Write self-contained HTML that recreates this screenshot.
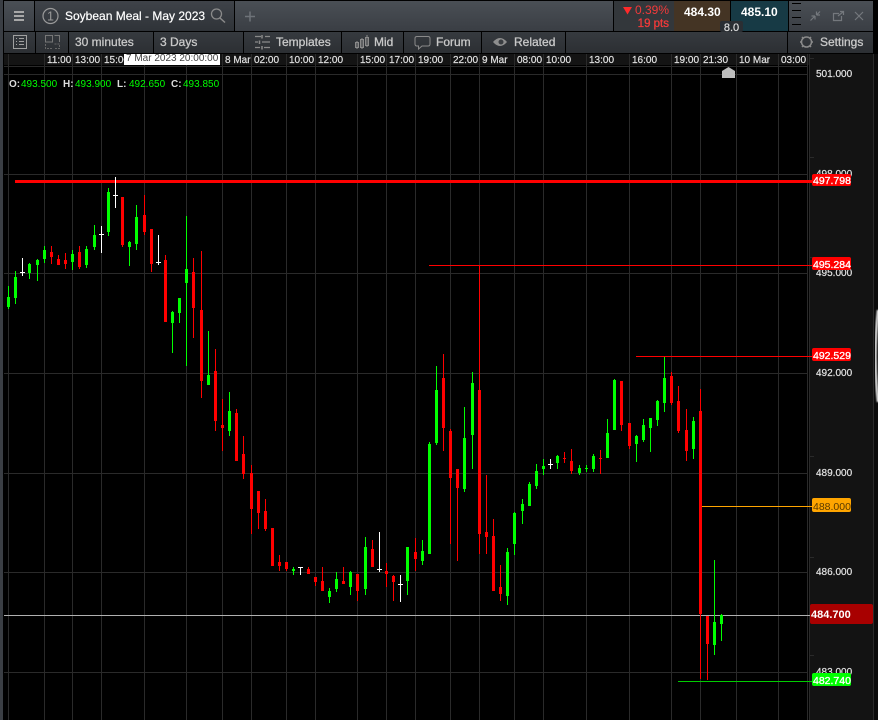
<!DOCTYPE html>
<html><head><meta charset="utf-8"><style>
html,body{margin:0;padding:0;background:#000;width:878px;height:720px;overflow:hidden}
svg{display:block;font-family:"Liberation Sans",sans-serif}
.t{font-size:12px;fill:#c8c8c8;stroke:#c8c8c8;stroke-width:.3px}
.g text{stroke:#e0e0e0;stroke-width:.2px}
.p text{stroke-width:.3px}
</style></head><body>
<svg width="878" height="720" viewBox="0 0 878 720" xmlns="http://www.w3.org/2000/svg">
<defs>
<linearGradient id="h1" x1="0" y1="0" x2="0" y2="1"><stop offset="0" stop-color="#4a4f55"/><stop offset="1" stop-color="#3a3e44"/></linearGradient>
<linearGradient id="h2" x1="0" y1="0" x2="0" y2="1"><stop offset="0" stop-color="#3f4349"/><stop offset="1" stop-color="#2f3338"/></linearGradient>
<linearGradient id="h3" x1="0" y1="0" x2="0" y2="1"><stop offset="0" stop-color="#363a3f"/><stop offset="1" stop-color="#2c2f33"/></linearGradient>
<filter id="bl"><feGaussianBlur stdDeviation="0.7"/></filter>
</defs>
<rect width="878" height="720" fill="#000"/>
<!-- header -->
<rect x="0" y="0" width="878" height="54" fill="#000"/>
<rect x="0" y="0" width="3" height="720" fill="#3a3e44"/>
<rect x="4" y="1" width="30" height="30" fill="url(#h1)"/>
<rect x="35" y="1" width="199" height="30" fill="url(#h2)"/>
<rect x="235" y="1" width="378" height="30" fill="url(#h1)"/>
<rect x="614" y="1" width="60" height="30" fill="#33373b"/>
<rect x="674" y="1" width="56" height="30" fill="#443424"/>
<rect x="731" y="1" width="57" height="30" fill="#173a45"/>
<rect x="789" y="1" width="84" height="30" fill="url(#h1)"/>
<path d="M792 3.500H801M792 10.500H801M792 17.500H801M792 24.500H801" stroke="#000" stroke-width="1"/>
<path d="M14 12H24M14 16H24M14 20H24" stroke="#a8a8a8" stroke-width="2"/>
<circle cx="50.500" cy="16" r="7.500" fill="none" stroke="#9a9a9a" stroke-width="1.200"/>
<text x="50.500" y="20.500" font-size="12.500" fill="#9a9a9a" text-anchor="middle">1</text>
<text x="65" y="20" font-size="12" fill="#fff" stroke="#fff" stroke-width=".2">Soybean Meal - May 2023</text>
<circle cx="216.500" cy="14" r="5" fill="none" stroke="#8a8a8a" stroke-width="1.300"/>
<path d="M220 18L225 22.500" stroke="#8a8a8a" stroke-width="1.500"/>
<path d="M245 16.500H255M250 11.500V21.500" stroke="#6e7379" stroke-width="1.500"/>
<path d="M623 7H632L627.500 14.500Z" fill="#ff2a2a"/>
<text x="669" y="14" font-size="12" fill="#f23a3a" text-anchor="end">0.39%</text>
<text x="669" y="27" font-size="11.500" fill="#f23a3a" stroke="#f23a3a" stroke-width=".3" text-anchor="end">19 pts</text>
<text x="684" y="16" font-size="12" font-weight="bold" fill="#fff">484.30</text>
<text x="741" y="16" font-size="12" font-weight="bold" fill="#fff">485.10</text>
<rect x="720" y="21" width="23" height="11" rx="2" fill="#2a2e33"/>
<text x="731.500" y="31" font-size="11" fill="#ddd" stroke="#ddd" stroke-width=".2" text-anchor="middle">8.0</text>
<g stroke="#74787d" fill="none" stroke-width="1.200">
<path d="M810.500 20.500L815 16M815 16V19.500M815 16H811.500M820 11.500L816.500 15M816.500 15V11.500M816.500 15H820"/>
<path d="M839 13.500H833.500V20.500H841.500V16M838 16L843.500 11.500M840 11.500H843.500V15"/>
<path d="M855 12L863 20M863 12L855 20"/>
</g>
<!-- toolbar -->
<rect x="4" y="32" width="31" height="21" fill="url(#h3)"/>
<rect x="36" y="32" width="32" height="21" fill="url(#h3)"/>
<rect x="69" y="32" width="84" height="21" fill="url(#h3)"/>
<rect x="154" y="32" width="89" height="21" fill="url(#h3)"/>
<rect x="244" y="32" width="97" height="21" fill="url(#h3)"/>
<rect x="342" y="32" width="61" height="21" fill="url(#h3)"/>
<rect x="404" y="32" width="77" height="21" fill="url(#h3)"/>
<rect x="482" y="32" width="83" height="21" fill="url(#h3)"/>
<rect x="566" y="32" width="221" height="21" fill="url(#h3)"/>
<rect x="788" y="32" width="85" height="21" fill="url(#h3)"/>
<rect x="13.500" y="35.500" width="13" height="13" fill="none" stroke="#a0a0a0"/>
<path d="M16 38.500H17M19 38.500H24M16 41.500H17M19 41.500H24M16 44.500H17M19 44.500H24" stroke="#a0a0a0"/>
<path d="M45.500 35.500H52.500V42H45.500ZM54.500 35.500H59.500V42" fill="none" stroke="#777"/>
<path d="M45.500 44V48.500H52.500M54.500 44H59.500V48.500H54.500" fill="none" stroke="#666" stroke-dasharray="2 1"/>
<text x="75" y="46" class="t">30 minutes</text>
<text x="160" y="46" class="t">3 Days</text>
<path d="M255 36.500H261M265 36.500H270M255 42H258M262 42H270M255 47.500H260M264 47.500H270" stroke="#8a8a8a" stroke-width="1.300"/>
<path d="M262 35V38.500M259.500 40.500V44M262 46V49.500" stroke="#8a8a8a" stroke-width="1.500"/>
<text x="276" y="46" class="t">Templates</text>
<path d="M355.500 42.500H358.500V47.500H355.500ZM360.500 39.500H363.500V47.500H360.500ZM365.500 37.500H368.500V45.500H365.500Z" fill="none" stroke="#8a8a8a"/>
<path d="M357 41V49M362 38V49M367 35V47" stroke="#8a8a8a" stroke-width="1"/>
<text x="374" y="46" class="t">Mid</text>
<path d="M417 36.500H428Q430 36.500 430 38.500V44Q430 46 428 46H422L418.500 49V46H417Q415 46 415 44V38.500Q415 36.500 417 36.500Z" fill="none" stroke="#8a8a8a"/>
<text x="436" y="46" class="t">Forum</text>
<path d="M493 42Q500 34 507 42Q500 50 493 42Z" fill="#8e8e8e"/>
<circle cx="501" cy="42" r="2.500" fill="#3a3d41"/>
<text x="514" y="46" class="t">Related</text>
<circle cx="806.500" cy="42" r="5" fill="none" stroke="#8a8a8a" stroke-width="1.500"/>
<path d="M800 42H801.500M811.500 42H813M802 37L803.500 38.500M811 37L809.500 38.500M802 47L803.500 45.500M811 47L809.500 45.500" stroke="#8a8a8a" stroke-width="1.500"/>
<text x="820" y="46" class="t">Settings</text>
<!-- axes backgrounds -->
<rect x="4" y="54" width="869" height="11" fill="#141414"/>
<rect x="810" y="54" width="63" height="666" fill="#131313"/>
<rect x="874" y="54" width="4" height="666" fill="#0b0b0b"/>
<!-- grid -->
<g stroke="#2a2a2a" stroke-width="1" shape-rendering="crispEdges">
<path d="M8.500 54V720M44.500 54V720M72.500 54V720M101.500 54V720M144.500 54V720M186.500 54V720M222.500 54V720M251.500 54V720M286.500 54V720M315.500 54V720M357.500 54V720M386.500 54V720M415.500 54V720M450.500 54V720M479.500 54V720M514.500 54V720M543.500 54V720M586.500 54V720M629.500 54V720M671.500 54V720M700.500 54V720M736.500 54V720M778.500 54V720M807.500 54V720M809.500 54V720M873.500 54V720"/>
<path d="M4 66.500H808M4 74.500H808M4 174.500H808M4 273.500H808M4 373.500H808M4 473.500H808M4 572.500H808M4 672.500H808"/>
<path d="M810 58.500H814M810 157.500H814M810 257.500H814M810 356.500H814M810 456.500H814M810 557.500H814M810 655.500H814"/>
</g>
<!-- time labels -->
<g font-size="10" fill="#e0e0e0" class="g">
<text x="47" y="63">11:00</text><text x="75" y="63">13:00</text><text x="104" y="63">15:00</text>
<text x="225" y="63">8 Mar</text><text x="254" y="63">02:00</text><text x="289" y="63">10:00</text><text x="318" y="63">12:00</text>
<text x="360" y="63">15:00</text><text x="389" y="63">17:00</text><text x="418" y="63">19:00</text><text x="453" y="63">22:00</text>
<text x="482" y="63">9 Mar</text><text x="517" y="63">08:00</text><text x="546" y="63">10:00</text><text x="589" y="63">13:00</text>
<text x="632" y="63">16:00</text><text x="674" y="63">19:00</text><text x="703" y="63">21:30</text><text x="739" y="63">10 Mar</text><text x="781" y="63">03:00</text>
</g>
<rect x="124" y="54" width="96" height="11" fill="#fff"/>
<text x="126" y="61" font-size="10" fill="#444">7 Mar 2023 20:00:00</text>
<path d="M722 78V71L728.500 67L735 71V78Z" fill="#bdbdbd"/>
<!-- OHLC -->
<g font-size="10">
<text x="9" y="87" font-weight="bold" fill="#ddd">O:</text><text x="21" y="87" fill="#0f0">493.500</text>
<text x="63" y="87" font-weight="bold" fill="#ddd">H:</text><text x="75" y="87" fill="#0f0">493.900</text>
<text x="117" y="87" font-weight="bold" fill="#ddd">L:</text><text x="129" y="87" fill="#0f0">492.650</text>
<text x="171" y="87" font-weight="bold" fill="#ddd">C:</text><text x="183" y="87" fill="#0f0">493.850</text>
</g>
<!-- axis labels -->
<g font-size="10" fill="#e4e4e4" class="g">
<text x="816" y="77">501.000</text><text x="816" y="177">498.000</text><text x="816" y="276">495.000</text><text x="816" y="376">492.000</text><text x="816" y="476">489.000</text><text x="816" y="575">486.000</text><text x="816" y="675">483.000</text>
</g>
<!-- level lines -->
<g shape-rendering="crispEdges">
<rect x="15" y="180" width="797" height="3" fill="#f00"/>
<rect x="429" y="265" width="383" height="1" fill="#f00"/>
<rect x="636" y="356" width="176" height="1" fill="#f00"/>
<rect x="700" y="506" width="112" height="1" fill="#ffa500"/>
<rect x="4" y="615" width="806" height="1" fill="#b0b0b0"/>
<rect x="678" y="681" width="134" height="1" fill="#0c0"/>
</g>
<!-- candles -->
<g fill="none" shape-rendering="crispEdges">
<path stroke="#0f0" stroke-width="1" d="M8.500 286V309M15.500 271V304M29.500 263V279M37.500 259V281M44.500 246V263M72.500 250V270M86.500 246V268M94.500 225V250M108.500 188V236M129.500 241V266M136.500 205V250M172.500 311V353M179.500 298V323M186.500 216V366M208.500 331V385M229.500 392V436M293.500 567V575M329.500 588V603M336.500 572V592M350.500 571V595M365.500 537V595M407.500 547V595M422.500 540V565M429.500 442V554M436.500 366V445M464.500 407V492M472.500 372V469M507.500 548V605M514.500 512V555M522.500 499V524M529.500 482V506M536.500 464V489M543.500 459V475M557.500 455V469M579.500 465V475M586.500 465V472M593.500 454V472M607.500 419V458M614.500 379V430M636.500 435V462M643.500 419V442M650.500 418V452M657.500 400V426M664.500 357V412M693.500 417V459M714.500 560V655M721.500 614V641"/>
<path stroke="#0f0" stroke-width="3" d="M8.500 297V307M15.500 277V298M29.500 264V273M37.500 260V265M44.500 250V259M72.500 254V262M86.500 249V265M94.500 235V247M108.500 192V232M129.500 242V247M136.500 217V244M172.500 312V323M179.500 298V313M186.500 269V283M208.500 375V385M229.500 411V431M293.500 569V571M329.500 591V597M336.500 579V589M350.500 572V587M365.500 547V589M407.500 547V581M422.500 551V561M429.500 444V554M436.500 390V443M464.500 438V489M472.500 383V435M507.500 552V596M514.500 513V544M522.500 504V511M529.500 484V506M536.500 471V486M543.500 466V469M557.500 456V463M579.500 468V473M586.500 468V469M593.500 456V469M607.500 433V458M614.500 380V430M636.500 436V444M643.500 425V440M650.500 418V428M657.500 401V420M664.500 378V403M693.500 421V449M714.500 622V645M721.500 615V624"/>
<path stroke="#f00" stroke-width="1" d="M51.500 246V264M58.500 255V265M65.500 253V269M79.500 246V269M122.500 197V247M144.500 195V235M151.500 229V272M165.500 255V322M193.500 258V338M201.500 251V398M215.500 349V431M222.500 399V451M236.500 409V461M243.500 436V479M251.500 465V534M258.500 491V529M265.500 499V531M272.500 528V566M279.500 555V571M286.500 562V571M308.500 567V574M315.500 577V586M322.500 567V591M343.500 567V584M357.500 574V601M372.500 540V567M386.500 563V587M393.500 575V601M415.500 538V571M443.500 354V451M450.500 429V544M457.500 469V561M479.500 265V554M486.500 475V554M493.500 519V591M500.500 565V601M564.500 452V463M571.500 449V474M600.500 450V474M621.500 381V431M629.500 423V449M671.500 372V405M678.500 386V433M686.500 409V461M700.500 389V679M707.500 616V680"/>
<path stroke="#f00" stroke-width="3" d="M51.500 252V257M58.500 259V265M65.500 260V264M79.500 252V267M122.500 197V245M144.500 215V232M151.500 229V264M165.500 260V322M193.500 272V308M201.500 310V381M215.500 371V421M222.500 425V428M236.500 413V461M243.500 454V474M251.500 473V509M258.500 491V513M265.500 511V529M272.500 528V566M279.500 562V566M286.500 562V569M308.500 569V574M315.500 577V582M322.500 581V591M343.500 581V584M357.500 574V591M372.500 549V567M386.500 571V574M393.500 576V582M415.500 552V559M443.500 378V428M450.500 431V478M457.500 469V488M479.500 390V534M486.500 532V537M493.500 536V591M500.500 587V594M564.500 458V459M571.500 461V471M600.500 458V459M621.500 381V425M629.500 423V446M671.500 376V403M678.500 401V431M686.500 430V451M700.500 411V614M707.500 616V644"/>
<path stroke="#fff" stroke-width="1" d="M22.500 258V276M101.500 226V253M115.500 177V208M158.500 235V265M300.500 567V575M379.500 532V572M400.500 575V602M550.500 459V469M20 272.500H25M99 234.500H104M113 195.500H118M156 262.500H161M298 567.500H303M377 569.500H382M398 584.500H403M548 464.500H553"/>
</g>
<!-- price tags -->
<g class="p">
<rect x="812" y="174" width="39" height="12" rx="2" fill="#f00"/><text x="813" y="184" fill="#fff" stroke="#fff" font-size="10.500">497.798</text>
<rect x="812" y="257" width="39" height="13" rx="2" fill="#f00"/><text x="813" y="268" fill="#fff" stroke="#fff" font-size="10.500">495.284</text>
<rect x="812" y="348" width="39" height="13" rx="2" fill="#f00"/><text x="813" y="359" fill="#fff" stroke="#fff" font-size="10.500">492.529</text>
<rect x="812" y="498" width="39" height="14" rx="2" fill="#ffa500"/><text x="813" y="510" fill="#5a3a00" font-size="10.500">488.000</text>
<rect x="810" y="604" width="63" height="20" rx="2" fill="#a80000"/><text x="811" y="618" fill="#fff" font-weight="bold" font-size="11">484.700</text>
<rect x="812" y="673" width="39" height="13" rx="2" fill="#0f0"/><text x="813" y="684" fill="#fff" stroke="#fff" font-size="10.500">482.740</text>
</g>
<path d="M878 310Q873 358 878 402" fill="none" stroke="#ddd" stroke-width="2.500" filter="url(#bl)"/>
</svg>
</body></html>
